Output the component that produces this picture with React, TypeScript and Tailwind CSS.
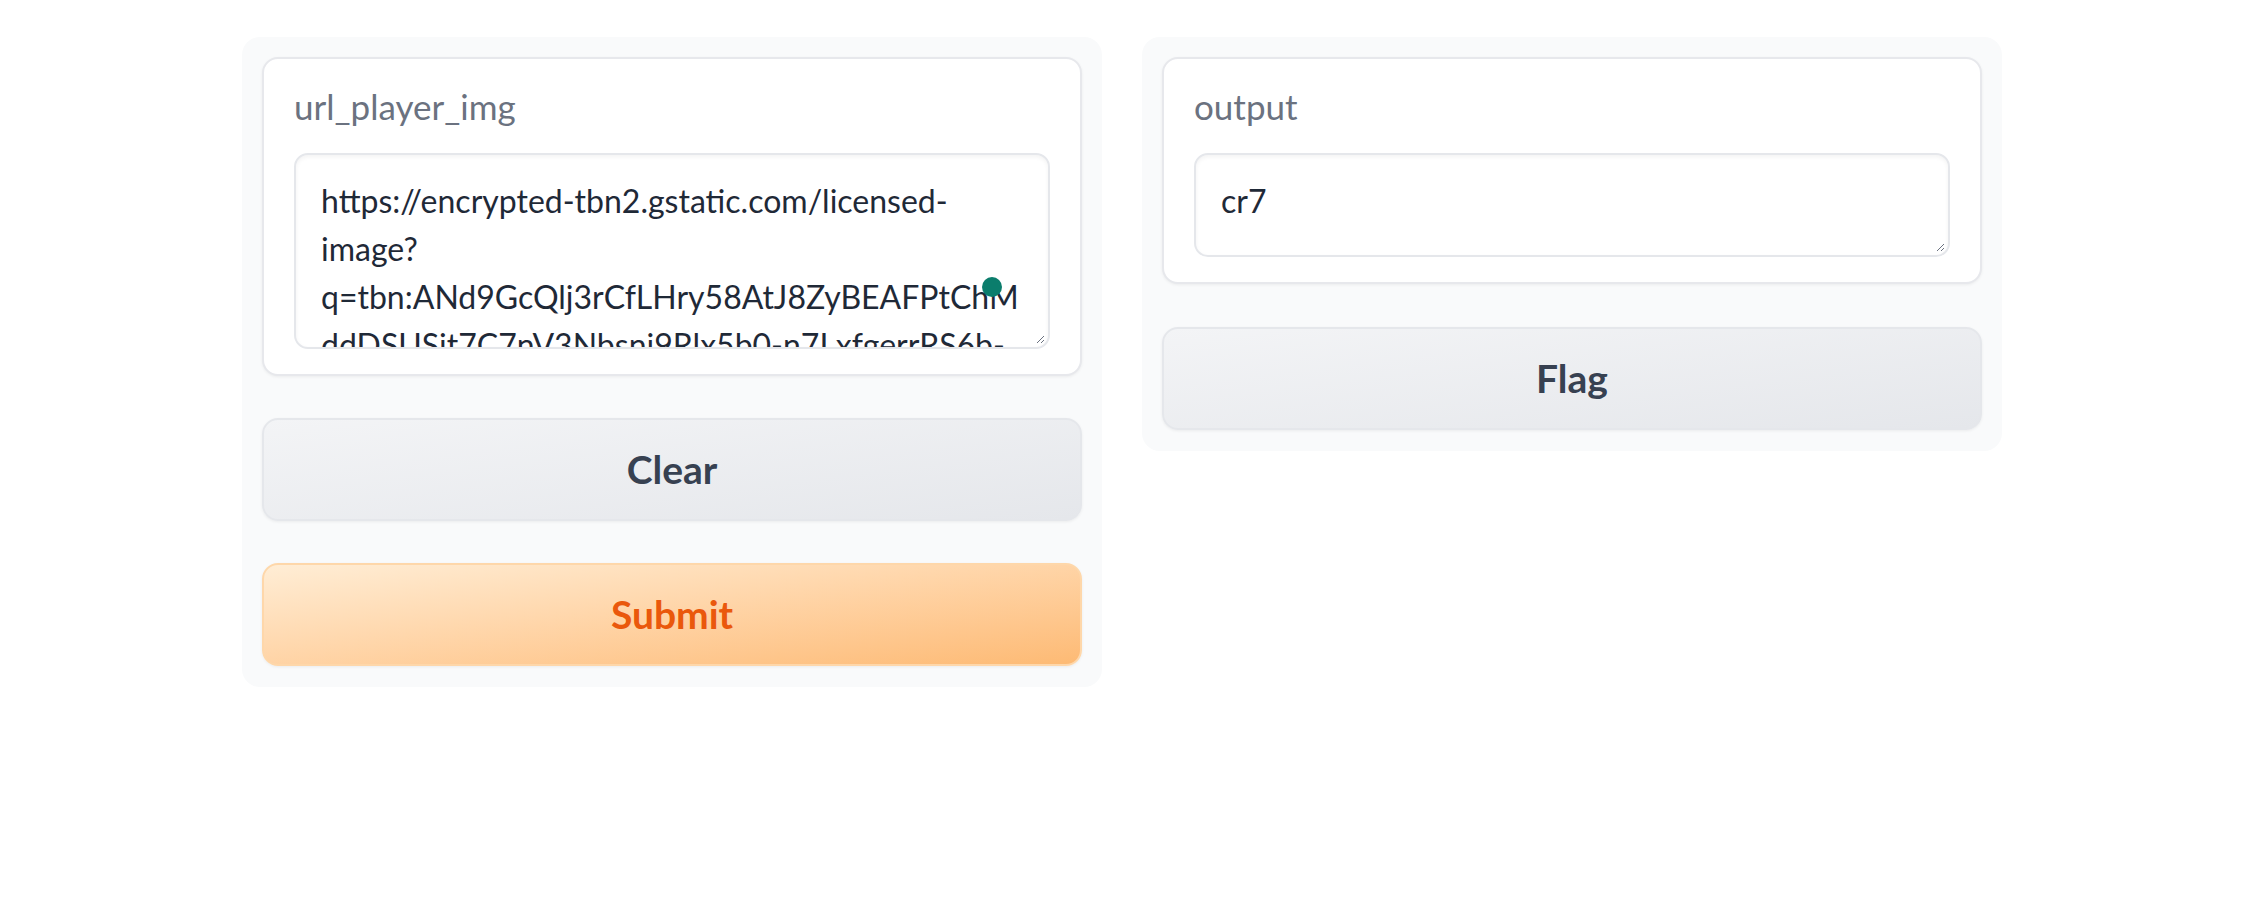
import type { ReactNode } from "react";

const urlLines = [
  "https://encrypted-tbn2.gstatic.com/licensed-",
  "image?",
  "q=tbn:ANd9GcQlj3rCfLHry58AtJ8ZyBEAFPtChM",
  "ddDSUSit7C7nV3Nbsnj9Rlx5b0-n7LxfgerrRS6b-",
];

function ResizeGrip() {
  return (
    <svg
      className="absolute right-[3px] bottom-[3px]"
      width="10"
      height="10"
      viewBox="0 0 10 10"
    >
      <path d="M9 2 L2 9 M9 6 L6 9" stroke="#6b7280" strokeWidth="1" />
    </svg>
  );
}

function Field({
  label,
  height,
  lines,
  children,
}: {
  label: string;
  height: string;
  lines: string[];
  children?: ReactNode;
}) {
  return (
    <div className="rounded-[16px] border-2 border-[#e7e8ec] bg-white px-[30px] pt-[25px] pb-[25px] shadow-[0_1px_3px_rgba(0,0,0,0.06)]">
      <div className="mb-[25px] text-[35px] leading-[44px] text-[#6b7280]">
        {label}
      </div>
      <div
        className={`relative overflow-hidden rounded-[14px] border-2 border-[#e5e7eb] bg-white pl-[25px] pt-[22px] text-[32px] leading-[48px] text-[#1f2937] shadow-[inset_0_2px_4px_rgba(0,0,0,0.05)] ${height}`}
      >
        {lines.map((line) => (
          <div key={line} className="whitespace-nowrap">
            {line}
          </div>
        ))}
        <ResizeGrip />
        {children}
      </div>
    </div>
  );
}

function GrayButton({ text }: { text: string }) {
  return (
    <button className="h-[103px] w-full rounded-[16px] border-2 border-[#e5e7eb] bg-gradient-to-br from-[#f3f4f6] to-[#e5e7eb] text-[39px] font-bold text-[#374151] shadow-[0_1px_3px_rgba(0,0,0,0.06)]">
      {text}
    </button>
  );
}

export default function App() {
  return (
    <div
      className="min-h-[905px] bg-white pl-[242px] pt-[37px]"
      style={{ fontFamily: "Lato, 'Liberation Sans', sans-serif" }}
    >
      <div className="flex items-start gap-[40px]">
        <section className="flex w-[860px] flex-col gap-[42px] rounded-[18px] bg-[#f9fafb] px-[20px] pt-[20px] pb-[21px]">
          <Field label="url_player_img" height="h-[196px]" lines={urlLines}>
            <span className="absolute left-[686px] top-[122px] h-[20px] w-[20px] rounded-full bg-[#0b7d6c]" />
          </Field>
          <GrayButton text="Clear" />
          <button className="h-[103px] w-full rounded-[16px] border-2 border-[#fed7aa] bg-gradient-to-br from-[#ffedd5] to-[#fdba74] text-[39px] font-bold text-[#ea580c] shadow-[0_1px_3px_rgba(0,0,0,0.06)]">
            Submit
          </button>
        </section>

        <section className="flex w-[860px] flex-col gap-[43px] rounded-[18px] bg-[#f9fafb] px-[20px] pt-[20px] pb-[21px]">
          <Field label="output" height="h-[104px]" lines={["cr7"]} />
          <GrayButton text="Flag" />
        </section>
      </div>
    </div>
  );
}
